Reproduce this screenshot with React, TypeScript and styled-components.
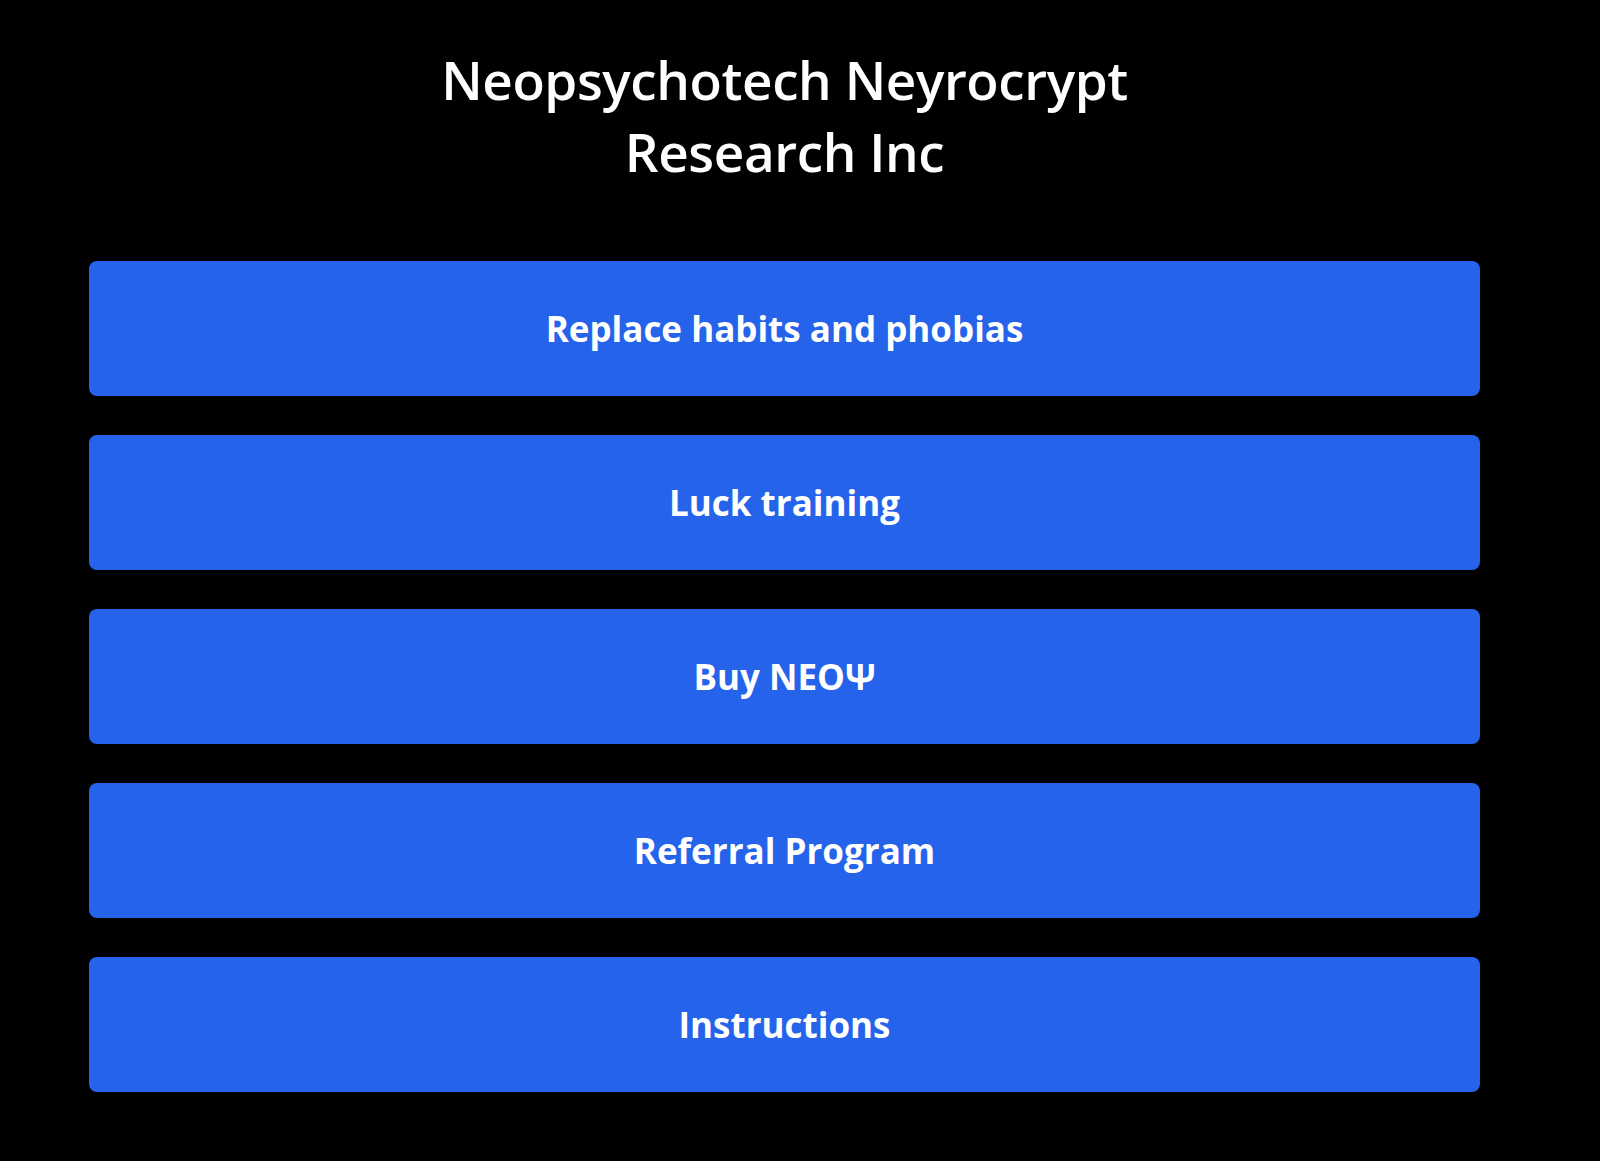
import styled, { createGlobalStyle } from 'styled-components';

const GlobalStyle = createGlobalStyle`
  html, body {
    margin: 0;
    padding: 0;
    background: #000;
  }

  body {
    font-family: 'Open Sans', 'Noto Sans', sans-serif;
    color: #fff;
  }
`;

const Page = styled.main`
  min-height: 1161px;
  box-sizing: border-box;
  padding: 44px 120px 60px 89px;
  display: flex;
  flex-direction: column;
  align-items: stretch;
`;

const Title = styled.h1`
  margin: 0 0 73px;
  text-align: center;
  font-size: 53px;
  line-height: 72px;
  font-weight: 600;
  letter-spacing: -0.4px;
`;

const Menu = styled.nav`
  display: flex;
  flex-direction: column;
  gap: 39px;
`;

const MenuButton = styled.button`
  height: 135px;
  border: none;
  border-radius: 8px;
  background: #2563eb;
  color: #fff;
  font-family: inherit;
  font-size: 35px;
  font-weight: 700;
  cursor: pointer;

  &:hover {
    background: #1d4ed8;
  }
`;

const items = [
  'Replace habits and phobias',
  'Luck training',
  'Buy NEOΨ',
  'Referral Program',
  'Instructions',
];

export default function App() {
  return (
    <>
      <GlobalStyle />
      <Page>
        <Title>
          Neopsychotech Neyrocrypt
          <br />
          Research Inc
        </Title>
        <Menu>
          {items.map((item) => (
            <MenuButton key={item}>{item}</MenuButton>
          ))}
        </Menu>
      </Page>
    </>
  );
}
